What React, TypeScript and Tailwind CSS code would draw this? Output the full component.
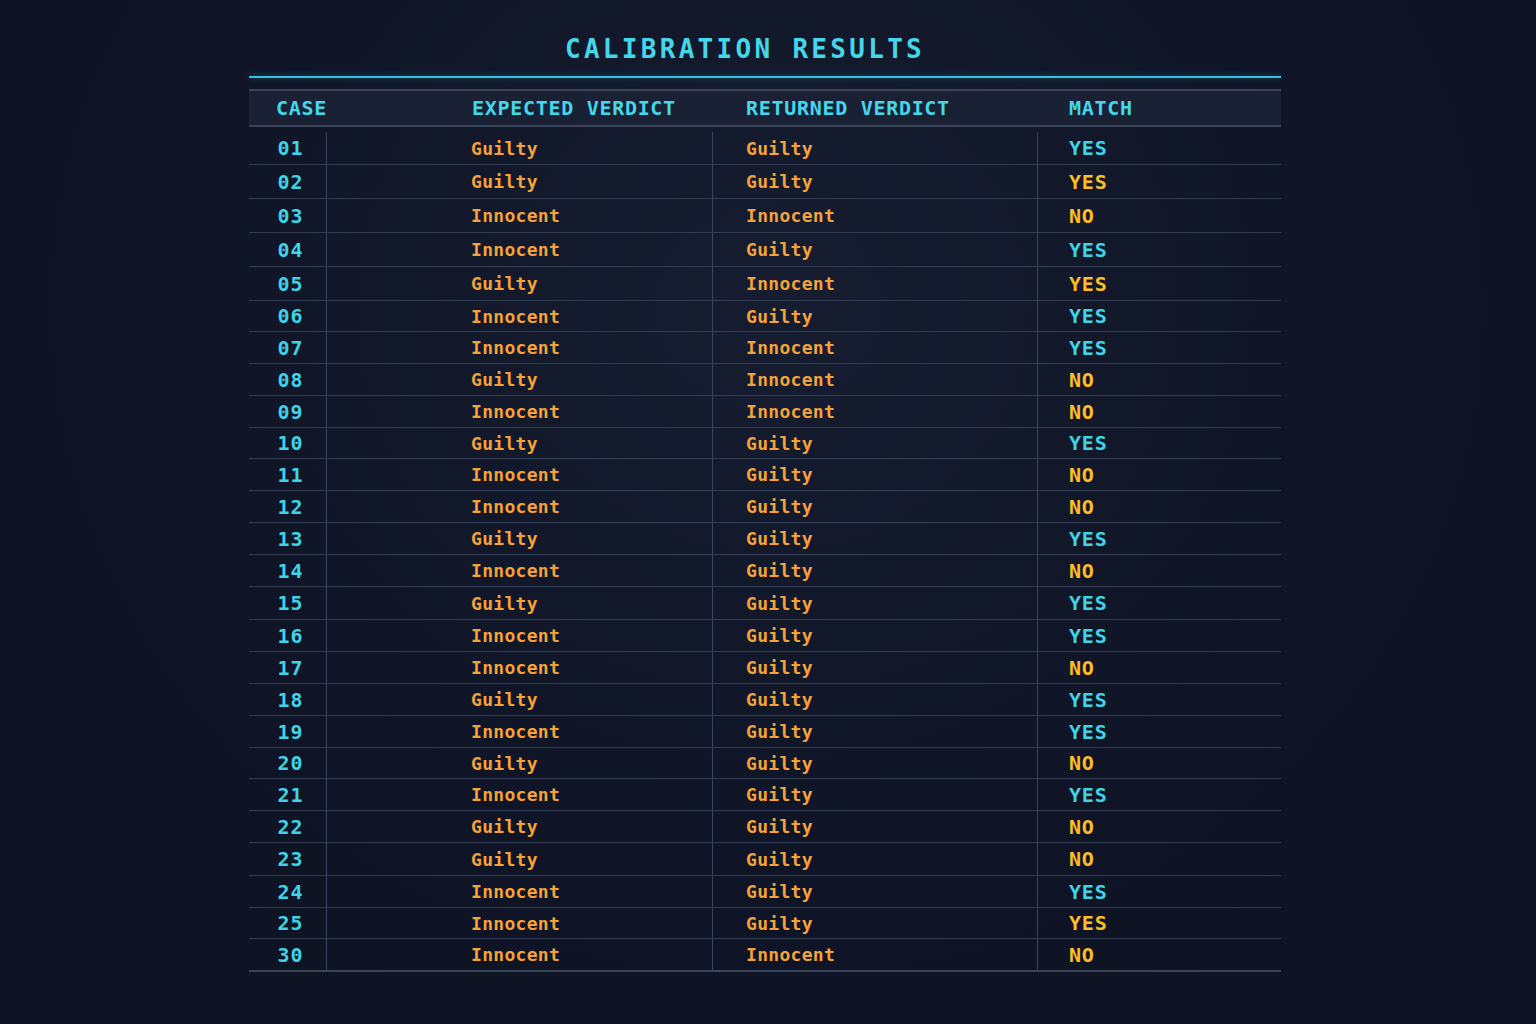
const rows: [string, string, string, string, boolean, number][] = [
  ["01", "Guilty", "Guilty", "YES", true, 33],
  ["02", "Guilty", "Guilty", "YES", false, 34],
  ["03", "Innocent", "Innocent", "NO", false, 34],
  ["04", "Innocent", "Guilty", "YES", true, 34],
  ["05", "Guilty", "Innocent", "YES", false, 34],
  ["06", "Innocent", "Guilty", "YES", true, 31],
  ["07", "Innocent", "Innocent", "YES", true, 32],
  ["08", "Guilty", "Innocent", "NO", false, 32],
  ["09", "Innocent", "Innocent", "NO", false, 32],
  ["10", "Guilty", "Guilty", "YES", true, 31],
  ["11", "Innocent", "Guilty", "NO", false, 32],
  ["12", "Innocent", "Guilty", "NO", false, 32],
  ["13", "Guilty", "Guilty", "YES", true, 32],
  ["14", "Innocent", "Guilty", "NO", false, 32],
  ["15", "Guilty", "Guilty", "YES", true, 33],
  ["16", "Innocent", "Guilty", "YES", true, 32],
  ["17", "Innocent", "Guilty", "NO", false, 32],
  ["18", "Guilty", "Guilty", "YES", true, 32],
  ["19", "Innocent", "Guilty", "YES", true, 32],
  ["20", "Guilty", "Guilty", "NO", false, 31],
  ["21", "Innocent", "Guilty", "YES", true, 32],
  ["22", "Guilty", "Guilty", "NO", false, 32],
  ["23", "Guilty", "Guilty", "NO", false, 33],
  ["24", "Innocent", "Guilty", "YES", true, 32],
  ["25", "Innocent", "Guilty", "YES", false, 31],
  ["30", "Innocent", "Innocent", "NO", false, 31],
];

export default function App() {
  return (
    <div className="w-[1536px] h-[1024px] overflow-hidden bg-[#0e1424] bg-[radial-gradient(ellipse_at_50%_30%,#161d30_0%,#0f1526_55%,#0d1322_100%)] font-['DejaVu_Sans_Mono',monospace] font-bold">
      <div className="ml-[249px] w-[1032px] pt-[33px]">
        {/* Title */}
        <h1 className="text-center pr-[40px] text-[26px] leading-[32px] tracking-[3.3px] text-[#45d6ea]">
          CALIBRATION RESULTS
        </h1>
        <div className="mt-[11px] h-[2px] bg-[#33c3e0] shadow-[0_0_6px_#22d3ee66]" />

        {/* Header */}
        <div className="mt-[11px] flex h-[38px] items-center border-y-2 border-y-[#3a4459] bg-[#1a2134] text-[20px] tracking-[0.7px] text-[#45d6ea]">
          <div className="w-[223px] pl-[27px]">CASE</div>
          <div className="w-[274px]">EXPECTED VERDICT</div>
          <div className="w-[323px]">RETURNED VERDICT</div>
          <div className="flex-1">MATCH</div>
        </div>

        {/* Body */}
        <div className="pt-[5px] border-b-2 border-b-[#3a4459]">
          {rows.map(([c, exp, ret, m, cyan, h], i) => (
            <div
              key={c}
              style={{ height: h }}
              className={`flex items-center ${i < rows.length - 1 ? "border-b border-b-[#323c52]" : ""}`}
            >
              <div className="w-[78px] h-full flex items-center justify-center pl-[6px] border-r border-r-[#3a445c] text-[20px] tracking-[1px] text-[#3fd3e6]">
                {c}
              </div>
              <div className="w-[385px] h-full flex items-center pl-[144px] text-[18px] tracking-[0.3px] text-[#f5a23a]">
                {exp}
              </div>
              <div className="w-[325px] h-full flex items-center border-l border-l-[#3a445c] pl-[33px] text-[18px] tracking-[0.3px] text-[#f5a23a]">
                {ret}
              </div>
              <div
                className={`flex-1 h-full flex items-center border-l border-l-[#3a445c] pl-[31px] text-[20px] tracking-[0.8px] ${
                  cyan ? "text-[#3fd3e6]" : "text-[#fbbf24]"
                }`}
              >
                {m}
              </div>
            </div>
          ))}
        </div>
      </div>
    </div>
  );
}
